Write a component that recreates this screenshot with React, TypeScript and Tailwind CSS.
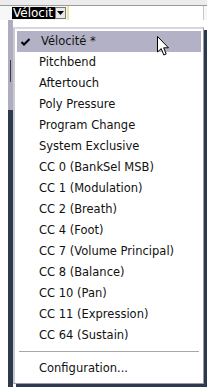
import React from "react";

const items = [
  "Pitchbend",
  "Aftertouch",
  "Poly Pressure",
  "Program Change",
  "System Exclusive",
  "CC 0 (BankSel MSB)",
  "CC 1 (Modulation)",
  "CC 2 (Breath)",
  "CC 4 (Foot)",
  "CC 7 (Volume Principal)",
  "CC 8 (Balance)",
  "CC 10 (Pan)",
  "CC 11 (Expression)",
  "CC 64 (Sustain)",
];

function Check() {
  return (
    <svg width="9" height="8" viewBox="0 0 9 8" className="shrink-0">
      <path d="M0.5 4 L3 6.5 L8.5 1" stroke="#000" strokeWidth="2" fill="none" />
    </svg>
  );
}

function Cursor() {
  return (
    <svg
      width="14"
      height="22"
      viewBox="0 0 14 22"
      className="absolute left-[157px] top-[36px]"
    >
      <path
        d="M0.5 0.5 L0.5 16 L4.2 12.6 L6.8 19 L9.2 18 L6.7 11.8 L11.5 11.8 Z"
        fill="#fff"
        stroke="#000"
        strokeWidth="1"
      />
    </svg>
  );
}

export default function App() {
  return (
    <div
      className="relative flex flex-col w-[207px] h-[387px] overflow-hidden bg-white"
      style={{ fontFamily: '"DejaVu Sans", Tahoma, sans-serif' }}
    >
      {/* top strip */}
      <div className="h-[5px] bg-[#ececec]" />
      <div className="h-[1px] bg-[#9a9a9a]" />
      <div className="flex items-center h-[14px] pl-[12px] bg-[#f7f7f7]">
        <div className="h-[12px] w-[43px] bg-black text-white text-[12px] leading-[12px] px-[1px] overflow-hidden whitespace-nowrap">
          Vélocit
        </div>
        <div className="flex items-center justify-center w-[11px] h-[12px] bg-[#e8e8e8] border border-[#7a7a7a]">
          <svg width="7" height="4" viewBox="0 0 7 4">
            <path d="M0 0 H7 L3.5 4 Z" fill="#000" />
          </svg>
        </div>
        <div className="w-[2px] h-[14px] bg-[#e8e6a0] ml-[1px]" />
        <div className="flex-1 h-[14px] bg-white border-r border-[#c8c8c8] mr-[3px]" />
      </div>

      <div className="flex flex-1">
        <div className="w-[8px]" />
        {/* edge of the panel behind the menu */}
        <div className="flex flex-col w-[5px]">
          <div className="flex flex-col h-[90px] bg-[#aeadc0] pt-[40px] pl-[2px]">
            <div className="w-[1px] h-[22px] bg-[#3a3a48]" />
          </div>
          <div className="flex-1 bg-[#2b3b4d]" />
        </div>

        <div className="flex-1 pt-[7px]">
          {/* popup menu */}
          <div className="w-[191px] h-[357px] bg-white border-l-2 border-t-2 border-l-[#c9c9cf] border-t-[#d6d6dc] border-r border-b border-r-[#9a9aa8] border-b-[#9a9aa8] pt-[2px] px-[2px] text-[11.5px] text-[#111] shadow-[3px_3px_0_#2b3b4d]">
            <div className="flex items-center h-[21px] bg-[#b3b1c6] pl-[4px]">
              <Check />
              <span className="ml-[11px]">Vélocité *</span>
            </div>
            {items.map((t) => (
              <div key={t} className="flex items-center h-[21px] pl-[22px] whitespace-nowrap">
                {t}
              </div>
            ))}
            <div className="flex items-center h-[12px] px-[2px]">
              <div className="w-full h-[2px] border-t border-[#a8a8a8] border-b border-b-white" />
            </div>
            <div className="flex items-center h-[21px] pl-[22px]">Configuration...</div>
          </div>
        </div>
      </div>

      <Cursor />
    </div>
  );
}
